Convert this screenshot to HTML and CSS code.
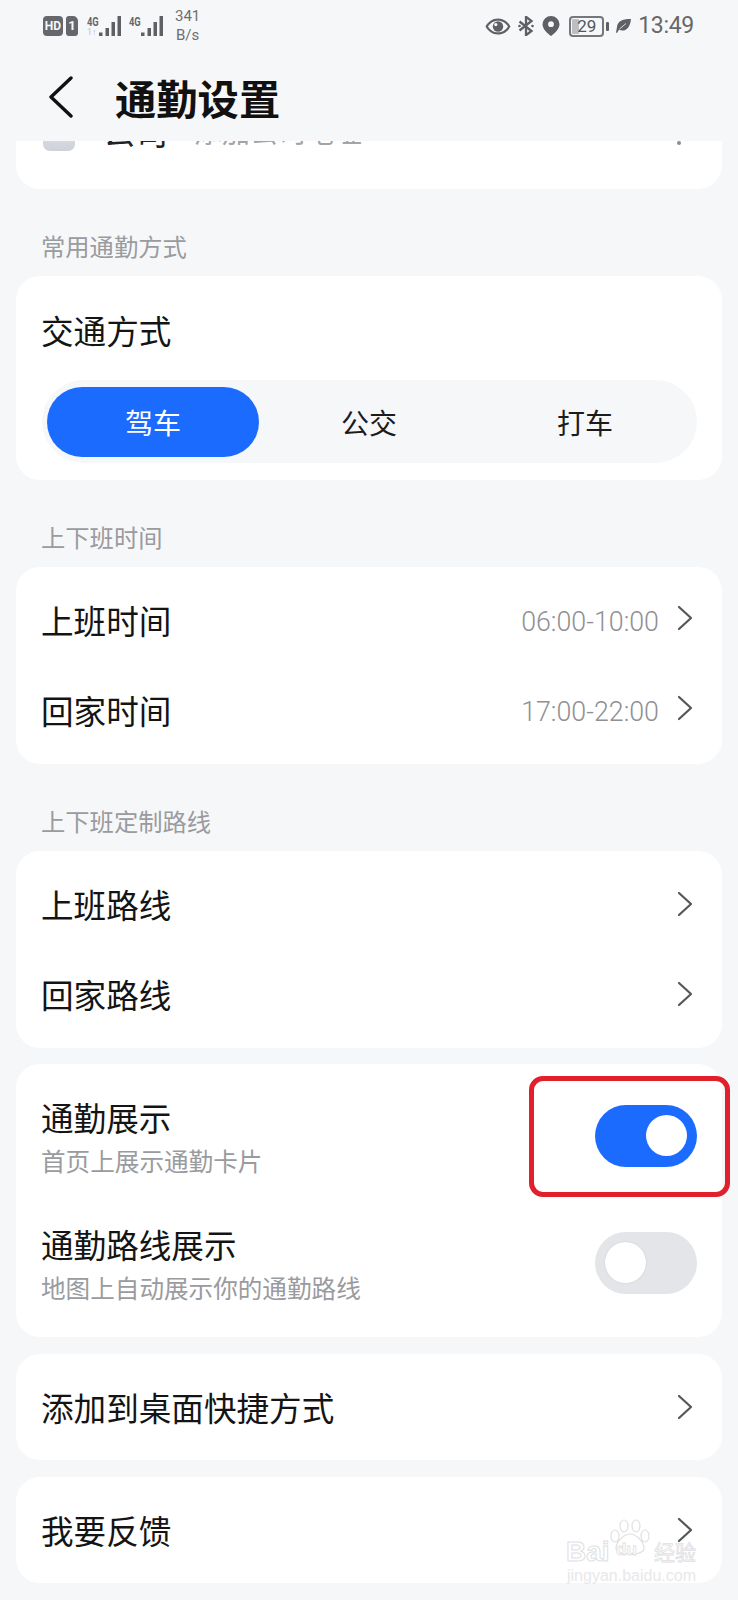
FILE: index.html
```html
<!DOCTYPE html>
<html lang="zh">
<head>
<meta charset="utf-8">
<title>通勤设置</title>
<link rel="stylesheet" href="styles.css">
</head>
<body>
<div class="status">
  <div class="status-left">
    <span class="hd">HD</span><span class="sim">1</span>
    <span class="net"><span class="net-text"><b>4G</b><i>1↑</i></span>
      <svg class="bars" viewBox="0 0 23 20"><path d="M1 16.500h3.500V20H1zM7.500 12H11v8H7.500zM13.500 6H17v14h-3.500zM19.500 0H23v20h-3.500z"/></svg></span>
    <span class="net"><span class="net-text"><b>4G</b><i></i></span>
      <svg class="bars" viewBox="0 0 23 20"><path d="M1 16.500h3.500V20H1zM7.500 12H11v8H7.500zM13.500 6H17v14h-3.500zM19.500 0H23v20h-3.500z"/></svg></span>
    <span class="speed">341<br>B/s</span>
  </div>
  <div class="status-right">
    <svg class="ic-eye" viewBox="0 0 26 17"><path fill-rule="evenodd" d="M13 0.500C7.500 0.500 3 3.800 0.500 8.500 3 13.200 7.500 16.500 13 16.500s10-3.300 12.500-8C23 3.800 18.500 0.500 13 0.500zm0 2.200c-4.300 0-7.900 2.300-10 5.800 2.100 3.500 5.700 5.800 10 5.800s7.900-2.300 10-5.800c-2.100-3.500-5.700-5.800-10-5.800z"/><circle cx="13" cy="8.500" r="5.200"/><circle cx="10.800" cy="6.600" r="1.600" fill="#f6f7f9"/></svg>
    <svg class="ic-bt" viewBox="0 0 16 20"><path d="M1.500 5.500l12 9.500L8 19.200V0.800l5.500 4.200-12 9.500" fill="none" stroke="#5f6066" stroke-width="2.300"/><circle cx="1.500" cy="10" r="1.300" fill="#5f6066"/><circle cx="14.500" cy="10" r="1.300" fill="#5f6066"/></svg>
    <svg class="ic-pin" viewBox="0 0 18 20"><path fill-rule="evenodd" d="M9 0A8.500 8.200 0 0 0 0.500 8.200C0.500 13 5.500 17.500 9 20c3.500-2.500 8.500-7 8.500-11.800A8.500 8.200 0 0 0 9 0zm0 5.300a2.900 2.900 0 1 1 0 5.800 2.900 2.900 0 0 1 0-5.800z"/></svg>
    <span class="battery"><span class="battery-fill"></span><span class="battery-num">29</span></span><span class="battery-tip"></span>
    <svg class="ic-leaf" viewBox="0 0 15 14"><path d="M15 0C8 0 1.500 1.500 1 8L0 13.500l1 .5L3 10.800c5 2.200 11 0 12-10.800z"/><path d="M3.500 10L10 4.500" stroke="#f6f7f9" stroke-width=".8" fill="none"/></svg>
    <span class="time">13:49</span>
  </div>
</div>

<header class="title-bar">
  <svg class="back" viewBox="0 0 26 42"><path d="M23 2L3 21l20 19" fill="none" stroke="#111" stroke-width="3.400" stroke-linecap="round" stroke-linejoin="round"/></svg>
  <h1>通勤设置</h1>
</header>

<main class="scroll">
  <section class="card clipped">
    <span class="place-icon"></span>
    <span class="place-name">公司</span>
    <span class="place-sub">添加公司地址</span>
    <span class="place-dot"></span>
  </section>

  <h2 class="label">常用通勤方式</h2>
  <section class="card transport">
    <div class="row-name transport-title">交通方式</div>
    <div class="segment">
      <span class="seg seg-on">驾车</span>
      <span class="seg">公交</span>
      <span class="seg">打车</span>
    </div>
  </section>

  <h2 class="label">上下班时间</h2>
  <section class="card list">
    <div class="row"><span class="row-name">上班时间</span><span class="value">06:00-10:00</span><svg class="chev" viewBox="0 0 16 26"><path d="M2 2l12 11L2 24" fill="none" stroke="#55565c" stroke-width="2.200" stroke-linecap="round" stroke-linejoin="round"/></svg></div>
    <div class="row"><span class="row-name">回家时间</span><span class="value">17:00-22:00</span><svg class="chev" viewBox="0 0 16 26"><path d="M2 2l12 11L2 24" fill="none" stroke="#55565c" stroke-width="2.200" stroke-linecap="round" stroke-linejoin="round"/></svg></div>
  </section>

  <h2 class="label">上下班定制路线</h2>
  <section class="card list">
    <div class="row"><span class="row-name">上班路线</span><svg class="chev" viewBox="0 0 16 26"><path d="M2 2l12 11L2 24" fill="none" stroke="#55565c" stroke-width="2.200" stroke-linecap="round" stroke-linejoin="round"/></svg></div>
    <div class="row"><span class="row-name">回家路线</span><svg class="chev" viewBox="0 0 16 26"><path d="M2 2l12 11L2 24" fill="none" stroke="#55565c" stroke-width="2.200" stroke-linecap="round" stroke-linejoin="round"/></svg></div>
  </section>

  <section class="card toggles">
    <div class="toggle-row">
      <div class="toggle-text"><div class="row-name">通勤展示</div><div class="sub">首页上展示通勤卡片</div></div>
      <span class="switch on"><span class="knob"></span></span>
      <span class="highlight"></span>
    </div>
    <div class="toggle-row">
      <div class="toggle-text"><div class="row-name">通勤路线展示</div><div class="sub">地图上自动展示你的通勤路线</div></div>
      <span class="switch"><span class="knob"></span></span>
    </div>
  </section>

  <section class="card single">
    <div class="row"><span class="row-name">添加到桌面快捷方式</span><svg class="chev" viewBox="0 0 16 26"><path d="M2 2l12 11L2 24" fill="none" stroke="#55565c" stroke-width="2.200" stroke-linecap="round" stroke-linejoin="round"/></svg></div>
  </section>

  <section class="card single">
    <div class="row"><span class="row-name">我要反馈</span><svg class="chev" viewBox="0 0 16 26"><path d="M2 2l12 11L2 24" fill="none" stroke="#55565c" stroke-width="2.200" stroke-linecap="round" stroke-linejoin="round"/></svg></div>
  </section>
</main>

<div class="watermark">
  <svg class="paw" viewBox="0 0 40 36"><g fill="none" stroke="#e0e0e3" stroke-width="1.200"><ellipse cx="5" cy="17" rx="4" ry="6"/><ellipse cx="14" cy="7" rx="4" ry="6"/><ellipse cx="26" cy="7" rx="4" ry="6"/><ellipse cx="35" cy="17" rx="4" ry="6"/><path d="M20 15c-6 0-14 8-14 14 0 5 7 6 14 6s14-1 14-6c0-6-8-14-14-14z"/></g></svg>
  <span class="wm-bai">Bai</span>
  <span class="wm-du">du</span>
  <span class="wm-jy">经验</span>
  <span class="wm-url">jingyan.baidu.com</span>
</div>
</body>
</html>
```
FILE: styles.css
```css
* { box-sizing: border-box; }
html, body { margin: 0; padding: 0; }
body {
  width: 738px;
  height: 1600px;
  overflow: hidden;
  position: relative;
  display: flex;
  flex-direction: column;
  background: #f6f7f9;
  color: #141414;
  font-family: "Noto Sans CJK SC", "Noto Sans", sans-serif;
}
.status {
  flex: none;
  height: 54px;
  padding: 0 44px 0 43px;
  display: flex;
  justify-content: space-between;
  align-items: flex-start;
  color: #5f6066;
}
.status-left, .status-right { display: flex; align-items: center; height: 52px; }
.hd {
  width: 20px; height: 20px; margin-right: 3px;
  background: #66676c; color: #f6f7f9; border-radius: 4px;
  font: 700 12px/20px "Roboto", sans-serif; text-align: center;
}
.sim {
  width: 12px; height: 20px; margin-right: 9px;
  background: #66676c; color: #f6f7f9; border-radius: 3px 5px 3px 3px;
  font: 700 13px/20px "Roboto", sans-serif; text-align: center;
}
.net { display: flex; align-items: flex-end; height: 20px; margin-right: 8px; }
.net + .speed { margin-left: 4px; }
.net-text { display: flex; flex-direction: column; width: 11px; height: 20px; white-space: nowrap; }
.net-text b { font: 700 13px/12px "Roboto", sans-serif; color: #66676c; transform: scaleX(.72); transform-origin: left; }
.net-text i { font: 400 9px/9px "Roboto", sans-serif; color: #c0c1c5; font-style: normal; }
.bars { width: 23px; height: 20px; fill: #5f6066; flex: none; }
.speed { font: 400 15px/19px "Roboto", sans-serif; color: #6d6e73; text-align: center; }
.ic-eye { width: 26px; height: 17px; fill: #5f6066; margin-right: 7px; }
.ic-bt { width: 16px; height: 20px; margin-right: 8px; }
.ic-pin { width: 18px; height: 20px; fill: #5f6066; margin-right: 9px; }
.battery {
  position: relative; width: 35px; height: 21px;
  border: 2px solid #76777b; border-radius: 4px;
  display: block;
}
.battery-fill { position: absolute; left: 1px; top: 1px; bottom: 1px; width: 7px; background: #bdbec1; border-radius: 1px; }
.battery-num { position: absolute; inset: 0; text-align: center; font: 400 17px/17px "Roboto", sans-serif; color: #55565c; }
.battery-tip { width: 3px; height: 9px; margin-left: 2px; margin-right: 7px; background: #5f6066; border-radius: 1px; }
.ic-leaf { width: 15px; height: 14px; fill: #5f6066; margin-right: 7px; }
.time { font: 400 23px/26px "Roboto", sans-serif; color: #66676c; letter-spacing: -.3px; }

.title-bar { flex: none; height: 87px; padding-left: 48px; display: flex; align-items: flex-start; }
.back { width: 26px; height: 42px; margin-top: 22px; }
.title-bar h1 { margin: 21px 0 0 41px; font-size: 41.3px; line-height: 44px; font-weight: 700; color: #111; }

.scroll {
  flex: 1;
  min-height: 0;
  overflow: hidden;
  padding: 0 16px;
}
.card { background: #fff; border-radius: 24px; width: 706px; }
.clipped {
  height: 48px;
  border-radius: 0 0 24px 24px;
  position: relative;
  overflow: hidden;
}
.place-icon { position: absolute; left: 27px; top: -28px; width: 32px; height: 38px; border-radius: 7px; background: linear-gradient(180deg, #e9eaee, #cfd1da); }
.place-name { position: absolute; left: 87px; top: -33px; font-size: 32.6px; line-height: 46px; color: #222; }
.place-sub { position: absolute; left: 178px; top: -30px; font-size: 28px; line-height: 40px; color: #a3a4a8; }
.place-dot { position: absolute; right: 41px; top: 0; width: 4px; height: 4px; border-radius: 50%; background: #8b8c92; }

.label {
  margin: 0;
  height: 87px;
  padding: 42px 25px 0;
  font-size: 24.3px;
  line-height: 30px;
  font-weight: 400;
  color: #9a9b9f;
}
.row-name { font-size: 32.6px; line-height: 42px; color: #141414; }
.transport { height: 204px; padding: 0 0 0 26px; }
.transport-title { margin-left: -1px; padding-top: 33px; height: 104px; }
.segment {
  width: 655px; height: 83px;
  padding: 7px 0 6px 5px;
  display: flex;
  background: #f6f7f9;
  border-radius: 42px;
}
.seg {
  flex: 0 0 212px; margin-right: 4px;
  border-radius: 35px; height: 70px;
  font-size: 28px; line-height: 70px; text-align: center; color: #1c1c1c;
}
.seg-on { background: #1c6bff; color: #fff; }

.list { height: 197px; padding: 8px 0; }
.list + .card { margin-top: 16px; }
.row { height: 90px; padding: 0 29px 0 25px; display: flex; align-items: center; }
.row-name { flex: 0 0 auto; }
.value { margin: 4px 0 0 auto; font: 300 26.8px/32px "Roboto", sans-serif; color: #8f9094; }
.chev { width: 16px; height: 26px; margin: 0 0 1px auto; flex: none; }
.value + .chev { margin: 0 0 5px 18px; }

.toggles { height: 273px; padding: 8px 0 0; }
.toggle-row { position: relative; height: 127px; padding: 0 25px; display: flex; align-items: center; justify-content: space-between; }
.toggle-text { margin-top: 2px; }
.toggle-text .row-name { line-height: 44px; }
.sub { font-size: 24.6px; line-height: 36px; margin-top: 3px; color: #9a9b9f; }
.switch { width: 102px; height: 62px; border-radius: 31px; background: #e4e5e8; padding: 10px; display: block; }
.switch .knob { display: block; width: 41px; height: 41px; border-radius: 50%; background: #fff; box-shadow: 0 0 2px rgba(0,0,0,.12); }
.switch.on { background: #1c6bff; }
.switch.on .knob { margin-left: 41px; box-shadow: none; }
.highlight {
  position: absolute; left: 513px; top: 4px;
  width: 201px; height: 121px;
  border: 5px solid #e1202c; border-radius: 14px;
  pointer-events: none;
}
.single { height: 106px; display: flex; align-items: center; }
.single .row { width: 100%; }
.toggles + .single { margin-top: 17px; }
.single + .single { margin-top: 17px; }

.watermark {
  position: absolute; left: 566px; top: 1518px; width: 136px; height: 66px;
  pointer-events: none;
  color: #fff;
}
.paw { position: absolute; left: 44px; top: 1px; width: 40px; height: 36px; }
.wm-bai { position: absolute; left: 0; top: 19px; font: 700 28px/30px "Liberation Sans", sans-serif; -webkit-text-stroke: 1px #e0e0e3; }
.wm-du { position: absolute; left: 50px; top: 22px; font: 700 17px/20px "Liberation Sans", sans-serif; -webkit-text-stroke: .8px #e0e0e3; }
.wm-jy { position: absolute; left: 88px; top: 18px; font: 400 21px/30px "Noto Sans CJK SC", sans-serif; -webkit-text-stroke: .8px #e0e0e3; }
.wm-url { position: absolute; left: 1px; top: 49px; white-space: nowrap; color: #e8e8ea; font: 400 16px/18px "Liberation Sans", sans-serif; }
```
